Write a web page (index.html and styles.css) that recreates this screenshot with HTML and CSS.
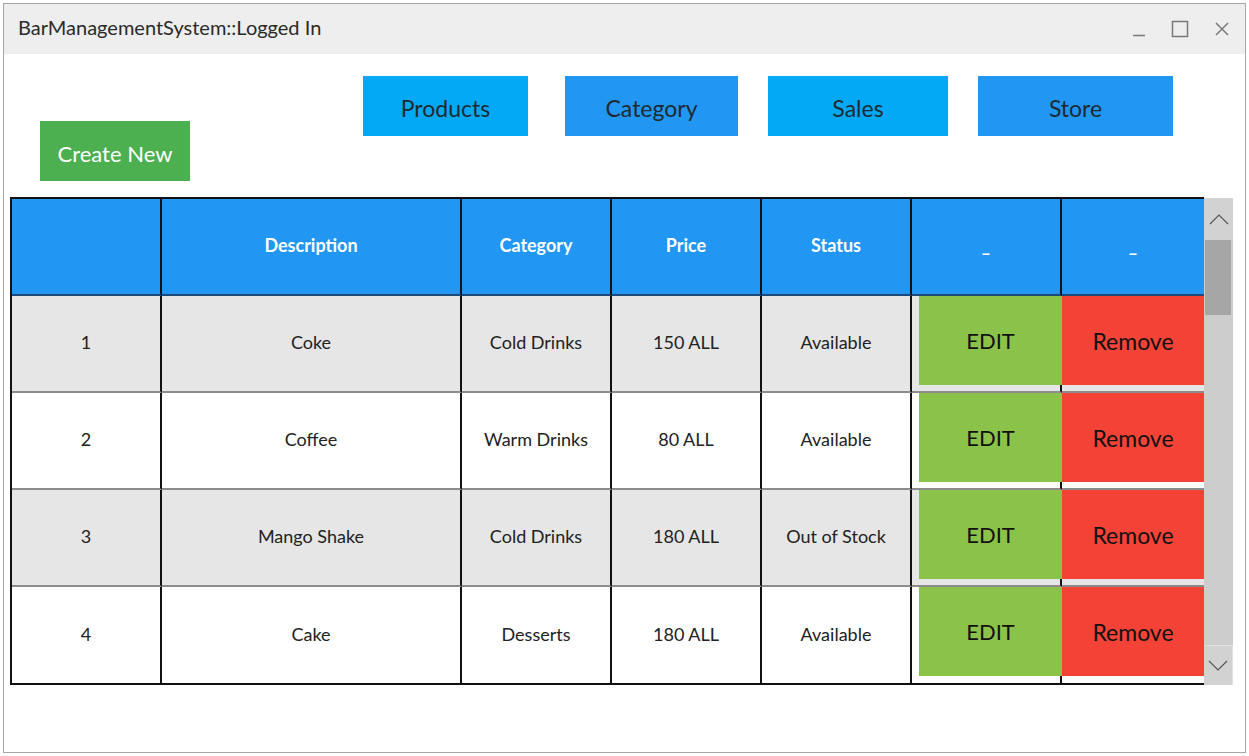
FILE: index.html
```html
<!DOCTYPE html>
<html>
<head>
<meta charset="utf-8">
<link rel="stylesheet" href="styles.css">
<title>BarManagementSystem</title>
</head>
<body>
<div class="window">
  <div class="titlebar">
    <span class="title">BarManagementSystem::Logged In</span>
    <div class="controls">
      <svg class="ctl" width="14" height="16" viewBox="0 0 14 16"><line x1="1" y1="14.5" x2="13" y2="14.5" stroke="#7a7a7a" stroke-width="1.5"/></svg>
      <svg class="ctl" width="18" height="18" viewBox="0 0 18 18"><rect x="1.5" y="1.5" width="15" height="15" fill="none" stroke="#7a7a7a" stroke-width="1.5"/></svg>
      <svg class="ctl" width="16" height="16" viewBox="0 0 16 16"><path d="M2 2 L14 14 M14 2 L2 14" stroke="#7a7a7a" stroke-width="1.5"/></svg>
    </div>
  </div>
  <div class="content">
    <nav class="nav">
      <button class="nav-btn light w-products">Products</button>
      <button class="nav-btn blue w-category">Category</button>
      <button class="nav-btn light w-sales">Sales</button>
      <button class="nav-btn blue w-store">Store</button>
    </nav>
    <button class="create">Create New</button>
    <div class="table-wrap">
      <div class="grid">
        <div class="cell head"></div>
        <div class="cell head">Description</div>
        <div class="cell head">Category</div>
        <div class="cell head">Price</div>
        <div class="cell head">Status</div>
        <div class="cell head">_</div>
        <div class="cell head last">_</div>

        <div class="cell odd">1</div>
        <div class="cell odd">Coke</div>
        <div class="cell odd">Cold Drinks</div>
        <div class="cell odd">150 ALL</div>
        <div class="cell odd">Available</div>
        <div class="cell odd act"><button class="edit">EDIT</button></div>
        <div class="cell odd act last"><button class="remove">Remove</button></div>

        <div class="cell">2</div>
        <div class="cell">Coffee</div>
        <div class="cell">Warm Drinks</div>
        <div class="cell">80 ALL</div>
        <div class="cell">Available</div>
        <div class="cell act"><button class="edit">EDIT</button></div>
        <div class="cell act last"><button class="remove">Remove</button></div>

        <div class="cell odd">3</div>
        <div class="cell odd">Mango Shake</div>
        <div class="cell odd">Cold Drinks</div>
        <div class="cell odd">180 ALL</div>
        <div class="cell odd">Out of Stock</div>
        <div class="cell odd act"><button class="edit">EDIT</button></div>
        <div class="cell odd act last"><button class="remove">Remove</button></div>

        <div class="cell final">4</div>
        <div class="cell final">Cake</div>
        <div class="cell final">Desserts</div>
        <div class="cell final">180 ALL</div>
        <div class="cell final">Available</div>
        <div class="cell final act"><button class="edit">EDIT</button></div>
        <div class="cell final act last"><button class="remove">Remove</button></div>
      </div>
      <div class="scrollbar">
        <div class="sb-btn up"><svg width="20" height="12" viewBox="0 0 20 12"><path d="M1 11 L10 2 L19 11" fill="none" stroke="#555" stroke-width="1.2"/></svg></div>
        <div class="sb-thumb"></div>
        <div class="sb-track"></div>
        <div class="sb-btn down"><svg width="20" height="12" viewBox="0 0 20 12"><path d="M1 1 L10 10 L19 1" fill="none" stroke="#555" stroke-width="1.2"/></svg></div>
      </div>
    </div>
  </div>
</div>
</body>
</html>
```
FILE: styles.css
```css
* { box-sizing: border-box; }
html, body { margin: 0; padding: 0; background: #ffffff; }
body { font-family: "Lato", "Open Sans", sans-serif; }

.window {
  margin: 3px 0 0 3px;
  width: 1243px;
  height: 750px;
  border: 1px solid #a6a6a6;
  background: #fff;
  display: flex;
  flex-direction: column;
}

.titlebar {
  height: 50px;
  background: #eeeeee;
  display: flex;
  align-items: center;
  justify-content: space-between;
  padding: 0 15px 4px 14px;
  flex-shrink: 0;
}
.title { font-size: 20px; color: #2a2a2a; }
.controls { display: flex; align-items: center; gap: 25px; padding-top: 4px; }
.ctl { display: block; }

.content { display: flex; flex-direction: column; align-items: flex-start; }

.nav { display: flex; margin: 22px 0 0 359px; }
.nav-btn {
  height: 60px;
  border: none;
  font-family: inherit;
  font-size: 23px;
  color: #1e2a30;
  padding: 4px 0 0;
}
.light { background: #03a9f4; }
.blue { background: #2196f3; }
.w-products { width: 165px; }
.w-category { width: 173px; margin-left: 37px; }
.w-sales { width: 180px; margin-left: 30px; }
.w-store { width: 195px; margin-left: 30px; }

.create {
  margin: -15px 0 0 36px;
  width: 150px;
  height: 60px;
  border: none;
  background: #4caf50;
  color: #fff;
  font-family: inherit;
  font-size: 22px;
  padding: 4px 0 0;
}

.table-wrap { display: flex; margin: 16px 0 0 6px; }

.grid {
  display: grid;
  grid-template-columns: 150px 300px 150px 150px 150px 150px 142px;
  grid-template-rows: 97px 97px 97px 97px 98px;
  border-left: 2px solid #111;
  border-top: 2px solid #111;
}
.cell {
  display: flex;
  align-items: center;
  justify-content: center;
  border-right: 2px solid #111;
  border-bottom: 2px solid #8c8c8c;
  font-size: 18px;
  color: #222;
  background: #fff;
  padding-bottom: 3px;
}
.cell.last { border-right: none; }
.cell.head {
  background: #2196f3;
  color: #fff;
  font-weight: 700;
  border-bottom: 2px solid #1a4a7a;
  padding-bottom: 4px;
}
.cell.odd { background: #e6e6e6; }
.cell.final { border-bottom: 2px solid #111; }

.cell.act {
  align-items: flex-start;
  justify-content: stretch;
  padding: 0 0 6px 7px;
}
.cell.final.act { padding-bottom: 7px; }
.cell.act.last { padding-left: 0; }
.edit, .remove {
  width: 100%;
  height: 100%;
  border: none;
  padding: 0;
  font-family: inherit;
  font-size: 22px;
  color: #111;
}
.edit { background: #8bc34a; margin-right: -2px; width: calc(100% + 2px); }
.remove { background: #f44336; font-size: 23px; }

.scrollbar {
  width: 29px;
  height: 487px;
  margin-top: 1px;
  background: #cdcdcd;
  display: flex;
  flex-direction: column;
}
.sb-btn {
  height: 42px;
  display: flex;
  align-items: center;
  justify-content: center;
  background: #d2d2d2;
}
.sb-btn.down { height: 40px; border-top: 1px solid #e0e0e0; border-right: 1px solid #e0e0e0; }
.sb-thumb { height: 75px; margin: 0 2px 0 1px; background: #a6a6a6; }
.sb-track { flex: 1; }
```
